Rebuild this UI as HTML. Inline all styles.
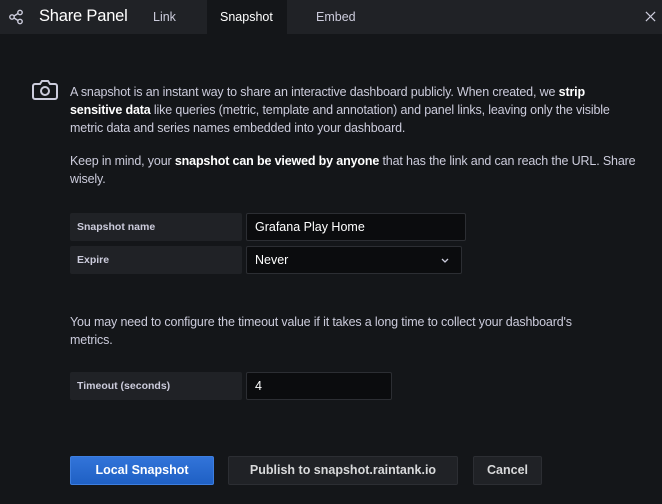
<!DOCTYPE html>
<html><head><style>
body{margin:0;width:662px;height:504px;background:#141619;font-family:"Liberation Sans",sans-serif;color:#ccccdc;overflow:hidden;position:relative}
.hdr{position:absolute;left:0;top:0;width:662px;height:34px;background:#202226}
.a{position:absolute}
.t{font-size:12.5px;line-height:18px;color:#ccccdc}
b{color:#fff}
.lbl{position:absolute;left:70px;width:172px;height:28px;background:#202226;border-radius:2px;font-size:10.5px;font-weight:bold;color:#ccccdc;line-height:28px;text-indent:7px;box-sizing:border-box}
.inp{position:absolute;left:246px;height:28px;background:#0b0c0e;border:1px solid #2c2e33;border-radius:2px;box-sizing:border-box;font-size:12.5px;line-height:26px;color:#fff;padding-left:8px}
.btn{position:absolute;top:456px;height:29px;border-radius:2px;box-sizing:border-box;font-size:12.5px;font-weight:bold;line-height:27px;text-align:center}
</style></head><body>
<div class="hdr"></div>
<svg class="a" style="left:8px;top:9px" width="16" height="16" viewBox="0 0 16 16" fill="none" stroke="#ccccdc" stroke-width="1.4"><circle cx="4" cy="8" r="2.2"/><circle cx="12" cy="3.5" r="2.2"/><circle cx="12" cy="12.5" r="2.2"/><path d="M6 7l4-2.5M6 9l4 2.5"/></svg>
<div class="a" style="left:39px;top:7px;font-size:16.5px;color:#fff;letter-spacing:-0.2px">Share Panel</div>
<div class="a" style="left:153px;top:10px;font-size:12.5px">Link</div>
<div class="a" style="left:207px;top:0;width:80px;height:34px;background:#141619"></div>
<div class="a" style="left:220px;top:10px;font-size:12.5px;color:#fff">Snapshot</div>
<div class="a" style="left:316px;top:10px;font-size:12.5px">Embed</div>
<svg class="a" style="left:645px;top:11px" width="11" height="11" viewBox="0 0 12 12" stroke="#ccccdc" stroke-width="1.3"><path d="M1 1l10 10M11 1L1 11"/></svg>
<svg class="a" style="left:31px;top:78px" width="28" height="24" viewBox="0 0 28 24" fill="none" stroke="#ccccdc" stroke-width="2"><path d="M4 6h5l2-3h6l2 3h5a2 2 0 0 1 2 2v11a2 2 0 0 1-2 2H4a2 2 0 0 1-2-2V8a2 2 0 0 1 2-2z"/><circle cx="14" cy="13" r="4"/></svg>
<div class="a t" style="left:70px;top:83px;width:585px;letter-spacing:-0.15px">A snapshot is an instant way to share an interactive dashboard publicly. When created, we <b>strip<br>sensitive data</b> like queries (metric, template and annotation) and panel links, leaving only the visible<br>metric data and series names embedded into your dashboard.</div>
<div class="a t" style="left:70px;top:152px;width:585px;letter-spacing:-0.15px">Keep in mind, your <b>snapshot can be viewed by anyone</b> that has the link and can reach the URL. Share<br>wisely.</div>
<div class="lbl" style="top:213px">Snapshot name</div>
<div class="inp" style="top:213px;width:220px">Grafana Play Home</div>
<div class="lbl" style="top:246px">Expire</div>
<div class="inp" style="top:246px;width:216px">Never<svg style="position:absolute;right:12px;top:11px" width="8" height="5" viewBox="0 0 8 5" fill="none" stroke="#ccccdc" stroke-width="1.3"><path d="M1 1l3 3 3-3"/></svg></div>
<div class="a t" style="left:70px;top:313px;width:590px;letter-spacing:-0.15px">You may need to configure the timeout value if it takes a long time to collect your dashboard's<br>metrics.</div>
<div class="lbl" style="top:372px">Timeout (seconds)</div>
<div class="inp" style="top:372px;width:146px">4</div>
<div class="btn" style="left:70px;width:144px;background:linear-gradient(#3274d9,#1f60c4);border:1px solid #3d7ee0;color:#fff">Local Snapshot</div>
<div class="btn" style="left:228px;width:230px;background:#202226;border:1px solid #2c2e33;color:#d8d9da">Publish to snapshot.raintank.io</div>
<div class="btn" style="left:473px;width:69px;background:#202226;border:1px solid #2c2e33;color:#d8d9da">Cancel</div>
</body></html>
